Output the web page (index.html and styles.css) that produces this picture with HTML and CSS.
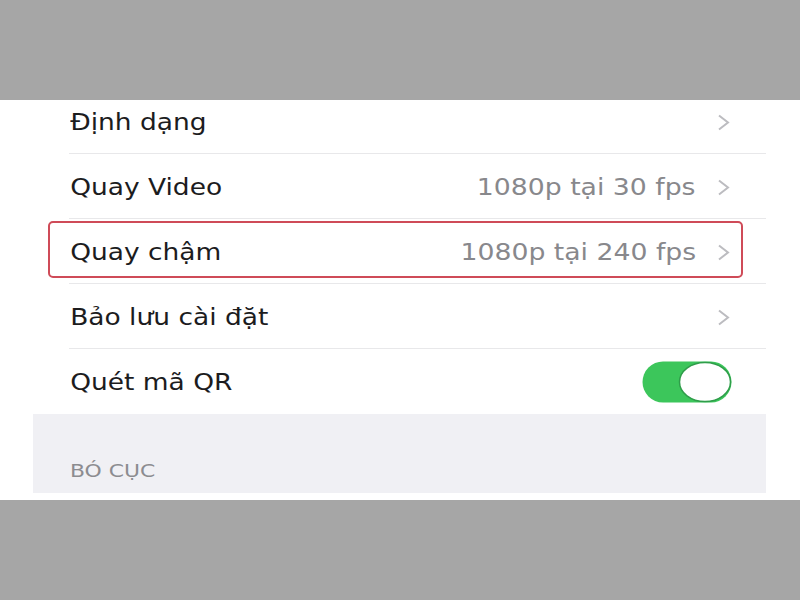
FILE: index.html
```html
<!DOCTYPE html>
<html lang="vi">
<head>
<meta charset="utf-8">
<title>Cài đặt Camera</title>
<link rel="stylesheet" href="styles.css">
</head>
<body>
<div class="band"></div>
<div class="screen">
  <div class="panel">
    <div class="list">
      <div class="row">
        <div class="row-inner">
          <span class="label">Định dạng</span>
          <span class="spacer"></span>
          <svg class="chev" width="13" height="17" viewBox="0 0 13 17"><polyline points="2,1.5 11,8.5 2,15.5" fill="none" stroke="#bcbcc0" stroke-width="2"/></svg>
        </div>
      </div>
      <div class="row">
        <div class="row-inner">
          <span class="label">Quay Video</span>
          <span class="spacer"></span>
          <span class="value">1080p tại 30 fps</span>
          <svg class="chev" width="13" height="17" viewBox="0 0 13 17"><polyline points="2,1.5 11,8.5 2,15.5" fill="none" stroke="#bcbcc0" stroke-width="2"/></svg>
        </div>
      </div>
      <div class="row highlighted">
        <div class="row-inner">
          <span class="label">Quay chậm</span>
          <span class="spacer"></span>
          <span class="value">1080p tại 240 fps</span>
          <svg class="chev" width="13" height="17" viewBox="0 0 13 17"><polyline points="2,1.5 11,8.5 2,15.5" fill="none" stroke="#bcbcc0" stroke-width="2"/></svg>
        </div>
        <div class="mark"></div>
      </div>
      <div class="row">
        <div class="row-inner">
          <span class="label">Bảo lưu cài đặt</span>
          <span class="spacer"></span>
          <svg class="chev" width="13" height="17" viewBox="0 0 13 17"><polyline points="2,1.5 11,8.5 2,15.5" fill="none" stroke="#bcbcc0" stroke-width="2"/></svg>
        </div>
      </div>
      <div class="row last">
        <div class="row-inner">
          <span class="label">Quét mã QR</span>
          <span class="spacer"></span>
          <svg class="toggle" width="90" height="42" viewBox="0 0 90 42"><rect x="0.5" y="0.5" width="89" height="41" rx="20.5" fill="#3cc65b"/><ellipse cx="63" cy="21" rx="25.5" ry="19.5" fill="#ffffff" stroke="#2f9d4a" stroke-width="1.5"/></svg>
        </div>
      </div>
    </div>
    <div class="section">
      <span class="section-title">BÓ CỤC</span>
    </div>
  </div>
</div>
<div class="band"></div>
</body>
</html>
```
FILE: styles.css
```css
html, body {
  margin: 0;
  padding: 0;
}
body {
  background: #a6a6a6;
  font-family: "DejaVu Sans", "Liberation Sans", sans-serif;
  width: 800px;
  height: 600px;
  overflow: hidden;
}
.band {
  height: 100px;
  background: #a6a6a6;
}
.screen {
  height: 400px;
  background: #ffffff;
  padding: 0 34px 0 33px;
  overflow: hidden;
}
.panel {
  width: 733px;
}
.list {
  margin-top: -11px;
  background: #ffffff;
}
.row {
  position: relative;
  height: 65px;
  padding-left: 36px;
}
.row-inner {
  height: 65px;
  box-sizing: border-box;
  display: flex;
  align-items: center;
  padding-right: 36px;
  padding-top: 2px;
  border-bottom: 1px solid #e8e8ea;
}
.row.last .row-inner {
  border-bottom: none;
  padding-top: 0;
}
.label {
  display: inline-block;
  font-size: 23px;
  color: #1c1c1e;
  padding-left: 1px;
  transform: scaleX(1.15);
  transform-origin: left center;
  white-space: nowrap;
}
.spacer {
  flex: 1;
}
.value {
  display: inline-block;
  font-size: 23px;
  color: #88888c;
  margin-right: 21px;
  transform: scaleX(1.16);
  transform-origin: right center;
  white-space: nowrap;
}
.chev {
  display: block;
}
.toggle {
  display: block;
  margin-right: -2px;
}
.mark {
  position: absolute;
  left: 15px;
  right: 23px;
  top: 2px;
  height: 57px;
  border: 2px solid #cf4b58;
  border-radius: 5px;
  box-sizing: border-box;
}
.section {
  height: 79px;
  background: #f0f0f4;
  box-sizing: border-box;
  padding: 47px 0 0 37px;
}
.section-title {
  display: inline-block;
  font-size: 17.5px;
  color: #8c8c90;
  transform: scaleX(1.25);
  transform-origin: left center;
}
```
